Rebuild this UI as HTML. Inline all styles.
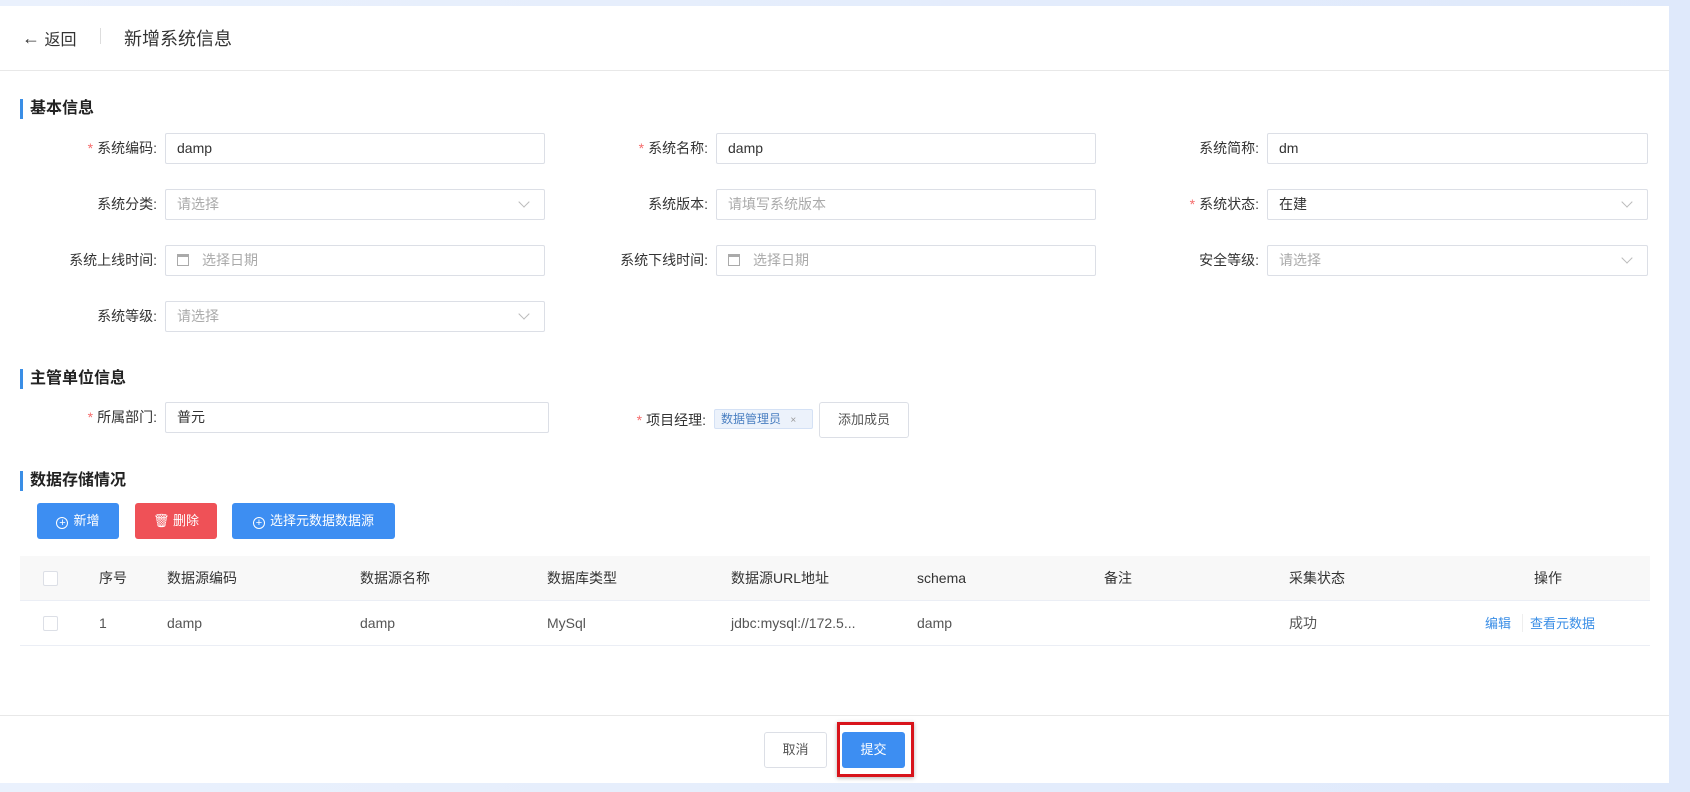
<!DOCTYPE html>
<html><head><meta charset="utf-8"><style>
*{box-sizing:border-box;margin:0;padding:0}
body{width:1690px;height:792px;position:relative;overflow:hidden;background:linear-gradient(90deg,#eaf1fd,#dfe9fb);font-family:"Liberation Sans","Noto Sans CJK SC",sans-serif;font-size:14px;color:#333}
.abs{position:absolute}
.card{left:0;top:6px;width:1669px;height:777px;background:#fff}
.hline{height:1px;background:#e8e8e8}
.sec{font-size:16px;font-weight:bold;color:#222;border-left:3px solid #3a8ee6;padding-left:7px;line-height:20px}
.lab{text-align:right;font-size:14px;color:#333;line-height:30px}
.lab b{color:#f56c6c;font-weight:normal;margin-right:4px}
.inp{height:31px;border:1px solid #dcdfe6;border-radius:2px;padding-left:11px;line-height:29px;font-size:14px;color:#333}
.ph{color:#aaa}
.arr{position:absolute;right:16px;top:8px;width:8px;height:8px;border-right:1px solid #bbb;border-bottom:1px solid #bbb;transform:rotate(45deg)}
.cal{display:inline-block;width:12px;height:12px;border:1px solid #aaa;border-top-width:3px;vertical-align:-1px;margin-right:13px}
.btn{height:36px;border-radius:3px;color:#fff;font-size:13px;line-height:36px;text-align:center}
.th{top:556px;height:45px;line-height:45px;font-size:14px;color:#333}
.td{top:601px;height:45px;line-height:45px;font-size:14px;color:#555}
.cb{width:15px;height:15px;border:1px solid #dcdfe6;border-radius:2px;background:#fff}
.plus{display:inline-block;width:12px;height:12px;border:1px solid #fff;border-radius:50%;font-size:11px;line-height:10px;text-align:center;margin-right:5px;vertical-align:-1px}
</style></head><body>
<div class="abs card"></div>
<div class="abs" style="left:22px;top:26px;font-size:16px;color:#333"><span style="font-size:18px;position:relative;top:-1px">←</span>&nbsp;返回</div>
<div class="abs" style="left:100px;top:28px;width:1px;height:16px;background:#ddd"></div>
<div class="abs" style="left:124px;top:25px;font-size:18px;color:#333">新增系统信息</div>
<div class="abs hline" style="left:0;top:70px;width:1669px"></div>

<div class="abs sec" style="left:20px;top:99px">基本信息</div>
<div class="abs lab" style="left:0;width:157px;top:133px"><b>*</b>系统编码:</div>
<div class="abs inp" style="left:165px;top:133px;width:380px">damp</div>
<div class="abs lab" style="left:540px;width:168px;top:133px"><b>*</b>系统名称:</div>
<div class="abs inp" style="left:716px;top:133px;width:380px">damp</div>
<div class="abs lab" style="left:1100px;width:159px;top:133px">系统简称:</div>
<div class="abs inp" style="left:1267px;top:133px;width:381px">dm</div>

<div class="abs lab" style="left:0;width:157px;top:189px">系统分类:</div>
<div class="abs inp ph" style="left:165px;top:189px;width:380px">请选择<i class="arr"></i></div>
<div class="abs lab" style="left:540px;width:168px;top:189px">系统版本:</div>
<div class="abs inp ph" style="left:716px;top:189px;width:380px">请填写系统版本</div>
<div class="abs lab" style="left:1100px;width:159px;top:189px"><b>*</b>系统状态:</div>
<div class="abs inp" style="left:1267px;top:189px;width:381px">在建<i class="arr"></i></div>

<div class="abs lab" style="left:0;width:157px;top:245px">系统上线时间:</div>
<div class="abs inp ph" style="left:165px;top:245px;width:380px"><i class="cal"></i>选择日期</div>
<div class="abs lab" style="left:540px;width:168px;top:245px">系统下线时间:</div>
<div class="abs inp ph" style="left:716px;top:245px;width:380px"><i class="cal"></i>选择日期</div>
<div class="abs lab" style="left:1100px;width:159px;top:245px">安全等级:</div>
<div class="abs inp ph" style="left:1267px;top:245px;width:381px">请选择<i class="arr"></i></div>

<div class="abs lab" style="left:0;width:157px;top:301px">系统等级:</div>
<div class="abs inp ph" style="left:165px;top:301px;width:380px">请选择<i class="arr"></i></div>

<div class="abs sec" style="left:20px;top:369px">主管单位信息</div>
<div class="abs lab" style="left:0;width:157px;top:402px"><b>*</b>所属部门:</div>
<div class="abs inp" style="left:165px;top:402px;width:384px">普元</div>
<div class="abs lab" style="left:540px;width:166px;top:405px"><b>*</b>项目经理:</div>
<div class="abs" style="left:714px;top:409px;width:99px;height:20px;background:#ecf2fb;border:1px solid #d4e1f5;border-radius:2px;font-size:12px;color:#4a7fc1;line-height:18px;padding-left:6px">数据管理员 <span style="color:#999;font-size:10px;margin-left:6px">×</span></div>
<div class="abs" style="left:819px;top:402px;width:90px;height:36px;border:1px solid #dcdfe6;border-radius:3px;font-size:13px;color:#555;line-height:34px;text-align:center">添加成员</div>

<div class="abs sec" style="left:20px;top:471px">数据存储情况</div>
<div class="abs btn" style="left:37px;top:503px;width:82px;background:#3d8ef2"><span class="plus">+</span>新增</div>
<div class="abs btn" style="left:135px;top:503px;width:82px;background:#ef5157">🗑 删除</div>
<div class="abs btn" style="left:232px;top:503px;width:163px;background:#3d8ef2"><span class="plus">+</span>选择元数据数据源</div>

<div class="abs" style="left:20px;top:556px;width:1630px;height:45px;background:#f8f8f8;border-bottom:1px solid #ebeef5"></div>
<div class="abs hline" style="left:20px;top:645px;width:1630px;background:#ebeef5"></div>
<div class="abs cb" style="left:43px;top:571px"></div>
<div class="abs th" style="left:99px">序号</div>
<div class="abs th" style="left:167px">数据源编码</div>
<div class="abs th" style="left:360px">数据源名称</div>
<div class="abs th" style="left:547px">数据库类型</div>
<div class="abs th" style="left:731px">数据源URL地址</div>
<div class="abs th" style="left:917px">schema</div>
<div class="abs th" style="left:1104px">备注</div>
<div class="abs th" style="left:1289px">采集状态</div>
<div class="abs th" style="left:1534px">操作</div>
<div class="abs cb" style="left:43px;top:616px"></div>
<div class="abs td" style="left:99px">1</div>
<div class="abs td" style="left:167px">damp</div>
<div class="abs td" style="left:360px">damp</div>
<div class="abs td" style="left:547px">MySql</div>
<div class="abs td" style="left:731px">jdbc:mysql://172.5...</div>
<div class="abs td" style="left:917px">damp</div>
<div class="abs td" style="left:1289px">成功</div>
<div class="abs td" style="left:1485px;font-size:13px;color:#3a8ee6">编辑</div>
<div class="abs" style="left:1522px;top:614px;width:1px;height:18px;background:#eee"></div>
<div class="abs td" style="left:1530px;font-size:13px;color:#3a8ee6">查看元数据</div>

<div class="abs hline" style="left:0;top:715px;width:1669px"></div>
<div class="abs" style="left:764px;top:732px;width:63px;height:36px;border:1px solid #dcdfe6;border-radius:3px;font-size:13px;line-height:34px;text-align:center;color:#555">取消</div>
<div class="abs" style="left:837px;top:722px;width:77px;height:55px;border:3px solid #d8141b;box-shadow:0 1px 4px rgba(0,0,0,.3)"></div>
<div class="abs btn" style="left:842px;top:732px;width:63px;background:#3d8ef2">提交</div>
</body></html>
